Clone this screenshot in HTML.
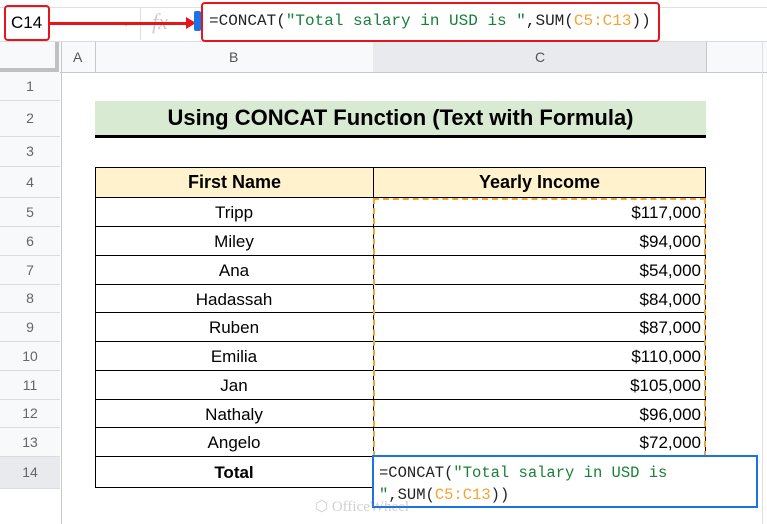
<!DOCTYPE html>
<html><head><meta charset="utf-8"><style>
body{margin:0;width:767px;height:524px;overflow:hidden;background:#fff;font-family:"Liberation Sans",Arial,sans-serif;position:relative}
.a{position:absolute}
.rh{position:absolute;left:0;width:60px;background:#f8f9fa;border-bottom:1px solid #dadce0;color:#666;font-size:14px;text-align:center}
.cell{position:absolute;box-sizing:border-box;font-size:17px;color:#000;display:flex;align-items:center}
.mono{font-family:"Liberation Mono",monospace}
</style></head><body>
<!-- column headers -->
<div class="a" style="left:0;top:41px;width:767px;height:31px;background:#f8f9fa;border-bottom:1px solid #c8c8c8"></div>
<div class="a" style="left:0;top:41px;width:55px;height:27px;border-right:4px solid #c0c0c0;border-bottom:4px solid #c0c0c0;background:#f8f9fa"></div>
<div class="a" style="left:61px;top:41px;width:1px;height:483px;background:#c8c8c8"></div>
<div class="a" style="left:95px;top:41px;width:1px;height:31px;background:#c8c8c8"></div>
<div class="a" style="left:373px;top:41px;width:1px;height:31px;background:#c8c8c8"></div>
<div class="a" style="left:706px;top:41px;width:1px;height:31px;background:#c8c8c8"></div>
<div class="a" style="left:762px;top:41px;width:1px;height:483px;background:#e0e0e0"></div>
<div class="a" style="left:373px;top:41px;width:333px;height:31px;background:#e8eaed"></div>
<div class="a" style="left:73px;top:49px;font-size:14px;color:#555">A</div>
<div class="a" style="left:229px;top:49px;font-size:14px;color:#555">B</div>
<div class="a" style="left:535px;top:49px;font-size:14px;color:#555">C</div>
<!-- formula bar -->
<div class="a" style="left:0;top:7px;width:767px;height:33px;border-top:1px solid #e0e0e0;border-bottom:1px solid #dadce0"></div>
<div class="a" style="left:140px;top:7px;width:1px;height:33px;background:#e0e0e0"></div>
<div class="a" style="left:122px;top:22px;border-left:4px solid transparent;border-right:4px solid transparent;border-top:4px solid #888"></div>
<div class="a" style="left:152px;top:9px;font-family:'Liberation Serif',serif;font-style:italic;font-size:22px;color:#ccc">fx</div>
<div class="a" style="left:4px;top:5px;height:32px;border:2.5px solid #e8141b;border-radius:4px;font-size:17px;line-height:32px;padding-left:5px;width:37px">C14</div>
<div class="a" style="left:49px;top:22px;width:140px;height:2.5px;background:#e8141b"></div>
<div class="a" style="left:186px;top:17px;border-top:6px solid transparent;border-bottom:6px solid transparent;border-left:10px solid #e8141b"></div>
<div class="a" style="left:194px;top:11px;width:7px;height:20px;background:#1a73e8;border-radius:2px"></div>
<div class="a" style="left:201px;top:2px;width:455px;height:36px;border:2.5px solid #e8141b;border-radius:4px;background:#fff"></div>
<div class="a mono" style="left:209px;top:12px;font-size:16px;color:#222;white-space:pre">=CONCAT(<span style="color:#188038">"Total salary in USD is "</span>,SUM(<span style="color:#f4a433">C5:C13</span>))</div>
<!-- row headers -->
<div class="rh" style="top:72px;height:28px;line-height:28px">1</div>
<div class="rh" style="top:101px;height:35px;line-height:35px">2</div>
<div class="rh" style="top:137px;height:29px;line-height:29px">3</div>
<div class="rh" style="top:167px;height:30px;line-height:30px">4</div>
<div class="rh" style="top:198px;height:28px;line-height:28px">5</div>
<div class="rh" style="top:227px;height:28px;line-height:28px">6</div>
<div class="rh" style="top:256px;height:28px;line-height:28px">7</div>
<div class="rh" style="top:285px;height:27px;line-height:27px">8</div>
<div class="rh" style="top:313px;height:28px;line-height:28px">9</div>
<div class="rh" style="top:342px;height:28px;line-height:28px">10</div>
<div class="rh" style="top:371px;height:28px;line-height:28px">11</div>
<div class="rh" style="top:400px;height:27px;line-height:27px">12</div>
<div class="rh" style="top:428px;height:28px;line-height:28px">13</div>
<div class="rh" style="top:457px;height:31px;line-height:31px;background:#e8eaed">14</div>
<!-- title -->
<div class="cell" style="left:95px;top:101px;width:611px;height:37px;background:#d9ead3;border-bottom:3px solid #000;justify-content:center;font-weight:bold;font-size:22px">Using CONCAT Function (Text with Formula)</div>
<!-- table -->
<div class="a" style="left:95px;top:167px;width:611px;height:321px;border:1px solid #000;box-sizing:border-box"></div>
<div class="cell" style="left:95px;top:167px;width:279px;height:31px;background:#fff2cc;border:1px solid #000;justify-content:center;font-weight:bold;font-size:18px">First Name</div>
<div class="cell" style="left:373px;top:167px;width:333px;height:31px;background:#fff2cc;border:1px solid #000;justify-content:center;font-weight:bold;font-size:18px">Yearly Income</div>
<div class="a" style="left:373px;top:198px;width:1px;height:290px;background:#000"></div>
<div id="rows"></div>
<div class="a" style="left:373px;top:198px;width:333px;height:259px;border:2px dashed #f4a433;box-sizing:border-box"></div>
<div class="cell" style="left:95px;top:457px;width:278px;height:31px;justify-content:center;font-weight:bold">Total</div>
<div class="a" style="left:372px;top:455px;width:386px;height:53px;border:2px solid #1a73e8;background:#fff;box-sizing:border-box"></div>
<div class="a mono" style="left:379px;top:462px;font-size:15.5px;line-height:22px;color:#222;white-space:pre">=CONCAT(<span style="color:#188038">"Total salary in USD is</span>
<span style="color:#188038">"</span>,SUM(<span style="color:#f4a433">C5:C13</span>))</div>
<div class="a" style="left:315px;top:497px;font-family:'Liberation Serif',serif;font-size:15px;color:rgba(120,120,120,0.35)">⬡ OfficeWheel</div>
<script>
var n=[["Tripp","$117,000",198],["Miley","$94,000",227],["Ana","$54,000",256],["Hadassah","$84,000",285],["Ruben","$87,000",313],["Emilia","$110,000",342],["Jan","$105,000",371],["Nathaly","$96,000",400],["Angelo","$72,000",428]];
var h="";var ends=[227,256,285,313,342,371,400,428,457];
n.forEach(function(r,i){var t=r[2],hh=ends[i]-t;
h+='<div class="cell" style="left:95px;top:'+t+'px;width:278px;height:'+hh+'px;justify-content:center;border-bottom:1px solid #000;padding-top:2px">'+r[0]+'</div>';
h+='<div class="cell" style="left:374px;top:'+t+'px;width:332px;height:'+hh+'px;justify-content:flex-end;padding-right:5px;padding-top:2px;border-bottom:1px solid #000">'+r[1]+'</div>';});
document.getElementById("rows").outerHTML=h;
</script>
</body></html>
